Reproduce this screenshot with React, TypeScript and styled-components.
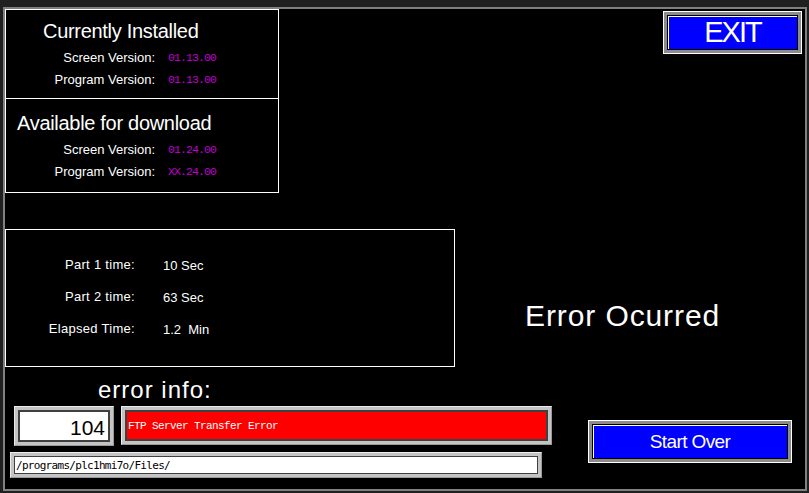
import React from "react";
import styled, { createGlobalStyle } from "styled-components";

const Global = createGlobalStyle`
  html, body { margin: 0; padding: 0; background: #202020; }
  body { font-family: "Liberation Sans", Arial, sans-serif; }
`;

const Page = styled.div`
  width: 809px;
  height: 493px;
  box-sizing: border-box;
  padding: 7px 0 0 3px;
  background: #202020;
`;

const Screen = styled.div`
  width: 800px;
  height: 480px;
  border: 2px solid #808080;
  background: #000;
  color: #fff;
  display: flex;
  flex-direction: column;
  overflow: hidden;
`;

const TopRow = styled.div`
  display: flex;
  justify-content: space-between;
  align-items: flex-start;
  height: 184px;
`;

const VersionBox = styled.div`
  width: 274px;
  height: 184px;
  box-sizing: border-box;
  border: 1px solid #fff;
  display: flex;
  flex-direction: column;
`;

const Section = styled.div<{ $top: number; $divider?: boolean }>`
  box-sizing: border-box;
  padding-top: ${(p) => p.$top}px;
  ${(p) => (p.$divider ? "height: 89px; border-bottom: 1px solid #fff;" : "flex: 1;")}
`;

const Title = styled.div<{ $indent: number }>`
  font-size: 20px;
  line-height: 24px;
  letter-spacing: -0.3px;
  padding-left: ${(p) => p.$indent}px;
  white-space: nowrap;
`;

const InfoGrid = styled.div<{ $label: number; $gap: number; $line: number; $top: number }>`
  display: grid;
  grid-template-columns: ${(p) => p.$label}px auto;
  column-gap: ${(p) => p.$gap}px;
  line-height: ${(p) => p.$line}px;
  margin-top: ${(p) => p.$top}px;
`;

const Label = styled.div<{ $spacing?: number }>`
  font-size: 13px;
  letter-spacing: ${(p) => p.$spacing ?? 0}px;
  text-align: right;
  white-space: nowrap;
  color: #fff;
`;

const VersionValue = styled.div`
  font-family: "Liberation Mono", "DejaVu Sans Mono", monospace;
  font-size: 11.5px;
  letter-spacing: -0.9px;
  color: #c000d0;
`;

const TimeValue = styled.div`
  font-size: 13px;
  white-space: pre;
  margin-top: 1px;
`;

const ExitButton = styled.div`
  margin: 2px 3px 0 0;
  width: 139px;
  height: 43px;
`;

const Bevel = styled.div<{ $w: number; $h: number }>`
  width: ${(p) => p.$w}px;
  height: ${(p) => p.$h}px;
  box-sizing: border-box;
  border: 1px solid #fff;
  background: #8c8c8c;
  padding: 3px;
  display: flex;
`;

const ButtonFace = styled.div<{ $size: number; $spacing: number }>`
  flex: 1;
  border: 1px solid #000;
  box-shadow: inset 1px 1px 0 #fff;
  background: #0000ff;
  color: #fff;
  display: flex;
  align-items: center;
  justify-content: center;
  font-size: ${(p) => p.$size}px;
  letter-spacing: ${(p) => p.$spacing}px;
  white-space: nowrap;
`;

const MiddleRow = styled.div`
  display: flex;
  margin-top: 36px;
  height: 138px;
`;

const TimesBox = styled.div`
  width: 450px;
  height: 138px;
  box-sizing: border-box;
  border: 1px solid #fff;
  padding-top: 19px;
`;

const ErrorText = styled.div`
  padding: 69px 0 0 70px;
  font-size: 30px;
  line-height: 36px;
  letter-spacing: 0.9px;
  white-space: nowrap;
`;

const BottomRow = styled.div`
  display: flex;
  flex: 1;
`;

const LeftCol = styled.div`
  width: 560px;
  display: flex;
  flex-direction: column;
`;

const ErrorLabel = styled.div`
  margin: 9px 0 0 93px;
  font-size: 24px;
  line-height: 28px;
  letter-spacing: 1px;
`;

const FieldRow = styled.div`
  display: flex;
  align-items: flex-start;
  gap: 7px;
  margin-top: 2px;
  padding-left: 9px;
`;

const Field = styled.div<{ $w: number; $h: number; $ml?: number; $mt?: number }>`
  width: ${(p) => p.$w}px;
  height: ${(p) => p.$h}px;
  margin-left: ${(p) => p.$ml ?? 0}px;
  margin-top: ${(p) => p.$mt ?? 0}px;
  box-sizing: border-box;
  background: #c4c4c4;
  border-top: 1px solid #ececec;
  border-left: 1px solid #ececec;
  border-right: 1px solid #9a9a9a;
  border-bottom: 1px solid #9a9a9a;
  padding: 3px;
  display: flex;
`;

const Well = styled.div<{ $bg: string; $edge: number }>`
  flex: 1;
  min-width: 0;
  background: ${(p) => p.$bg};
  border: ${(p) => p.$edge}px solid #404040;
  display: flex;
  overflow: hidden;
`;

const NumberText = styled.div`
  flex: 1;
  text-align: right;
  padding: 5px 3px 0 0;
  font-size: 21px;
  line-height: 22px;
  color: #000;
`;

const MessageText = styled.div`
  align-self: center;
  padding: 1px 0 0 1px;
  font-family: "Liberation Mono", "DejaVu Sans Mono", monospace;
  font-size: 11px;
  letter-spacing: -0.6px;
  color: #fff;
  white-space: nowrap;
`;

const PathText = styled.div`
  align-self: center;
  padding-left: 1px;
  font-family: "DejaVu Sans Mono", "Liberation Mono", monospace;
  font-size: 11px;
  letter-spacing: -0.7px;
  color: #000;
  white-space: nowrap;
`;

const StartOver = styled.div`
  margin: 53px 0 0 23px;
`;

const installed = [
  ["Screen Version:", "01.13.00"],
  ["Program Version:", "01.13.00"],
];
const available = [
  ["Screen Version:", "01.24.00"],
  ["Program Version:", "XX.24.00"],
];
const times = [
  ["Part 1 time:", "10 Sec"],
  ["Part 2 time:", "63 Sec"],
  ["Elapsed Time:", "1.2  Min"],
];

export default function App() {
  return (
    <>
      <Global />
      <Page>
        <Screen>
          <TopRow>
            <VersionBox>
              <Section $top={9} $divider>
                <Title $indent={37}>Currently Installed</Title>
                <InfoGrid $label={149} $gap={13} $line={22} $top={4}>
                  {installed.map(([l, v]) => (
                    <React.Fragment key={l}>
                      <Label>{l}</Label>
                      <VersionValue>{v}</VersionValue>
                    </React.Fragment>
                  ))}
                </InfoGrid>
              </Section>
              <Section $top={12}>
                <Title $indent={11}>Available for download</Title>
                <InfoGrid $label={149} $gap={13} $line={22} $top={4}>
                  {available.map(([l, v]) => (
                    <React.Fragment key={l}>
                      <Label>{l}</Label>
                      <VersionValue>{v}</VersionValue>
                    </React.Fragment>
                  ))}
                </InfoGrid>
              </Section>
            </VersionBox>
            <ExitButton>
              <Bevel $w={139} $h={43}>
                <ButtonFace $size={29} $spacing={-2}>EXIT</ButtonFace>
              </Bevel>
            </ExitButton>
          </TopRow>
          <MiddleRow>
            <TimesBox>
              <InfoGrid $label={129} $gap={28} $line={31} $top={0}>
                {times.map(([l, v]) => (
                  <React.Fragment key={l}>
                    <Label $spacing={0.3}>{l}</Label>
                    <TimeValue>{v}</TimeValue>
                  </React.Fragment>
                ))}
              </InfoGrid>
            </TimesBox>
            <ErrorText>Error Ocurred</ErrorText>
          </MiddleRow>
          <BottomRow>
            <LeftCol>
              <ErrorLabel>error info:</ErrorLabel>
              <FieldRow>
                <Field $w={100} $h={40}>
                  <Well $bg="#fff" $edge={2}>
                    <NumberText>104</NumberText>
                  </Well>
                </Field>
                <Field $w={431} $h={39}>
                  <Well $bg="#ff0000" $edge={2}>
                    <MessageText>FTP Server Transfer Error</MessageText>
                  </Well>
                </Field>
              </FieldRow>
              <Field $w={532} $h={26} $ml={5} $mt={6}>
                <Well $bg="#fff" $edge={1}>
                  <PathText>/programs/plc1hmi7o/Files/</PathText>
                </Well>
              </Field>
            </LeftCol>
            <StartOver>
              <Bevel $w={204} $h={43}>
                <ButtonFace $size={19} $spacing={-0.6}>Start Over</ButtonFace>
              </Bevel>
            </StartOver>
          </BottomRow>
        </Screen>
      </Page>
    </>
  );
}
